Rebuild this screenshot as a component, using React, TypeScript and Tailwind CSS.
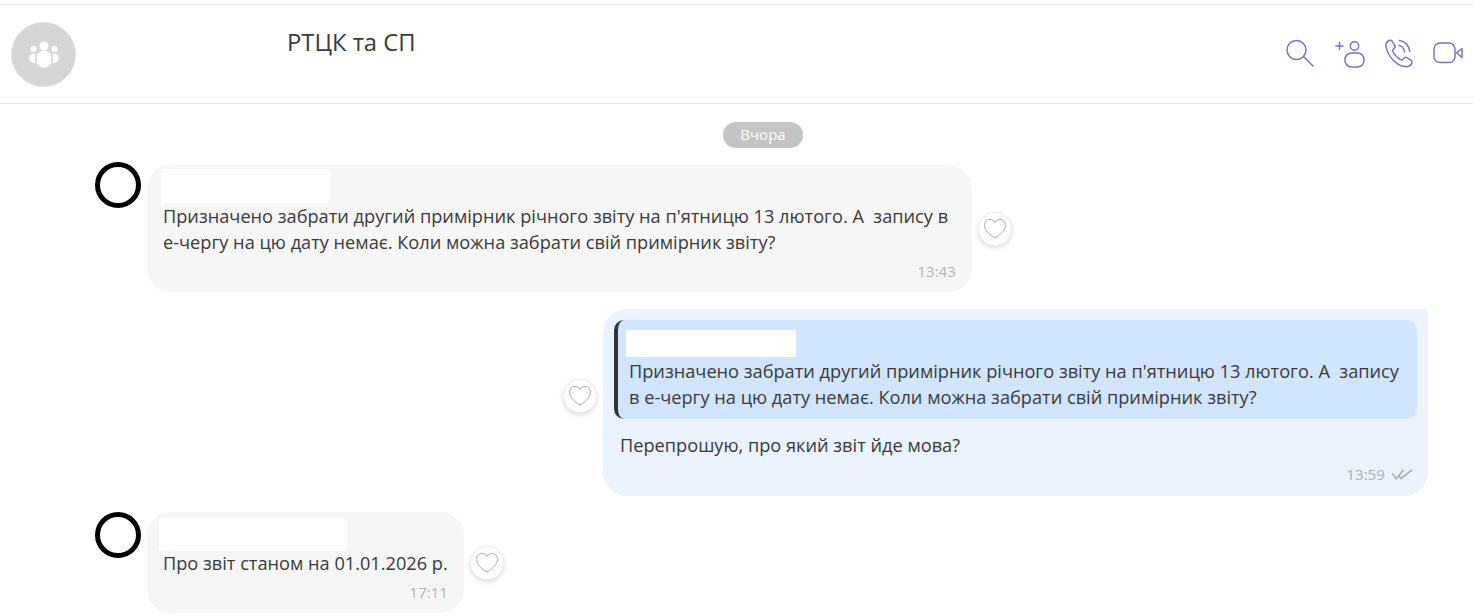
import React from 'react';

const FONT = 'font-["Open_Sans","Noto_Sans",sans-serif]';

const HeartButton: React.FC = () => (
    <div className="w-[34px] h-[34px] rounded-full bg-white border border-[#eeeeee] shadow-[0_2px_5px_rgba(0,0,0,0.14)] flex items-center justify-center shrink-0">
        <svg width="24" height="22" viewBox="0 0 24 22" fill="none" stroke="#a9a9a9" strokeWidth="1">
            <path d="M12 20C8 17.500 1.500 13 1.500 7.500C1.500 4 4 1.500 7 1.500C9 1.500 11 2.500 12 4.500C13 2.500 15 1.500 17 1.500C20 1.500 22.500 4 22.500 7.500C22.500 13 16 17.500 12 20Z" />
        </svg>
    </div>
);

const Ring: React.FC = () => (
    <div className="w-[46px] h-[46px] rounded-full border-[5px] border-black shrink-0 bg-white" />
);

const HeaderIcons: React.FC = () => (
    <div className="flex items-center gap-[19px] text-[#7d72c3]">
        <svg className="mr-px" width="30" height="30" viewBox="0 0 30 30" fill="none" stroke="currentColor" strokeWidth="1.500" strokeLinecap="round">
            <circle cx="11.500" cy="12" r="9.500" />
            <path d="M18.500 18.500L28 28" />
        </svg>
        <svg width="30" height="30" viewBox="0 0 30 30" fill="none" stroke="currentColor" strokeWidth="1.500" strokeLinecap="round">
            <path d="M1 8H8M4.500 4.500V11.500" />
            <circle cx="19.500" cy="8" r="4.200" />
            <rect x="10" y="15" width="19" height="14" rx="6.500" />
        </svg>
        <svg width="30" height="30" viewBox="0 0 30 30" fill="none" stroke="currentColor" strokeWidth="1.500" strokeLinecap="round" strokeLinejoin="round">
            <path d="M5 2.500C3 3.500 1.500 5.500 2 8.500C3 14 6 19 10 23C14 27 19 29 23.500 28.500C25.500 28.300 27.500 26.500 28 24.500C28.200 23.500 27.700 22.800 27 22.300L23 19.700C22 19.100 21 19.300 20.300 20L18.700 21.500C18 22.100 17.200 22 16.500 21.600C13 19.500 10.500 17 8.800 13.500C8.400 12.700 8.500 12 9.200 11.300L10.500 10C11.200 9.300 11.300 8.400 10.800 7.500L8.300 3.300C7.600 2.300 6.300 1.900 5 2.500Z" />
            <path d="M15 7.500C17.800 7.800 20.200 10.500 20.500 14" />
            <path d="M15.500 2.500C21 3 25.300 8 25.800 13.500" />
        </svg>
        <svg width="30" height="24" viewBox="0 0 30 24" fill="none" stroke="currentColor" strokeWidth="1.500" strokeLinejoin="round">
            <rect x="1" y="2" width="21" height="19.500" rx="6" />
            <path d="M29 7.500L23.500 11.800L29 16.500Z" />
        </svg>
    </div>
);

const GroupAvatar: React.FC = () => (
    <div className="w-[65px] h-[65px] rounded-full bg-[#d6d6d6] border border-[#dedede] flex items-center justify-center shrink-0">
        <svg width="32" height="28" viewBox="0 0 32 28" fill="white">
            <circle cx="16" cy="5" r="4.500" />
            <circle cx="5.500" cy="8" r="3" />
            <circle cx="26.500" cy="8" r="3" />
            <path d="M9 15C9 11.500 12 10 16 10C20 10 23 11.500 23 15V20C23 24.500 20 26.500 16 26.500C12 26.500 9 24.500 9 20Z" />
            <path d="M7.500 12.500C7 14 7 17 7.500 22.500C4 21.500 1 20.500 1 17C1 14 3.500 12.500 7.500 12.500Z" />
            <path d="M24.500 12.500C25 14 25 17 24.500 22.500C28 21.500 31 20.500 31 17C31 14 28.500 12.500 24.500 12.500Z" />
        </svg>
    </div>
);

export default function App() {
    return (
        <div className={`w-[1473px] h-[616px] overflow-hidden bg-white text-[#3a3a3a] ${FONT}`}>
            <div className="mt-[4px] h-[100px] border-t border-b border-[#e6e6e6] flex pl-[11px] pr-[10px]">
                <div className="pt-[17px]"><GroupAvatar /></div>
                <div className="ml-[211px] mt-[21px] text-[23.8px] leading-[32px]">РТЦК та СП</div>
                <div className="ml-auto pt-[33px]"><HeaderIcons /></div>
            </div>

            <div className="flex justify-start pt-[18px] pl-[723px]">
                <div className="w-[80px] h-[26px] rounded-full bg-[#c4c4c4] text-white text-[15px] leading-[25px] text-center">Вчора</div>
            </div>

            {/* вхідне */}
            <div className="flex items-start pl-[95px] mt-[17px]">
                <div className="mr-[6px] mt-[-3px]"><Ring /></div>
                <div className="w-[825px] h-[127px] rounded-[24px] bg-[#f6f6f6] pl-[14px] pt-[4px] pr-[14px] flex flex-col">
                    <div className="w-[169px] h-[34px] bg-white" />
                    <div className="ml-[2px] text-[18.2px] leading-[26px] whitespace-pre">
                        Призначено забрати другий примірник річного звіту на п'ятницю 13 лютого. А  запису в{'\n'}е-чергу на цю дату немає. Коли можна забрати свій примірник звіту?
                    </div>
                    <div className="text-right text-[15.2px] leading-[20px] text-[#b5b5b5] mt-[6px] pr-[2px]">13:43</div>
                </div>
                <div className="ml-[6px] mt-[47px]"><HeartButton /></div>
            </div>

            {/* вихідне */}
            <div className="flex items-center justify-end pr-[45px] mt-[17px]">
                <div className="mr-[6px] mt-[-13px]"><HeartButton /></div>
                <div className="w-[825px] h-[187px] rounded-tl-[24px] rounded-bl-[24px] rounded-br-[24px] bg-[#ebf3ff] p-[11px] flex flex-col">
                    <div className="h-[99px] rounded-[10px] bg-[#d1e5ff] border-l-[4px] border-[#2f343d] pl-[8px] pt-[10px]">
                        <div className="w-[170px] h-[27px] bg-white" />
                        <div className="ml-[3px] mt-[1px] text-[18.2px] leading-[26px] whitespace-pre">
                            Призначено забрати другий примірник річного звіту на п'ятницю 13 лютого. А  запису{'\n'}в е-чергу на цю дату немає. Коли можна забрати свій примірник звіту?
                        </div>
                    </div>
                    <div className="ml-[6px] mt-[13px] text-[18.2px] leading-[26px]">Перепрошую, про який звіт йде мова?</div>
                    <div className="mt-[6px] flex items-center justify-end gap-[6px] text-[15.2px] leading-[20px] text-[#a7b0bb] pr-[4px]">
                        <span>13:59</span>
                        <svg width="22" height="12" viewBox="0 0 22 12" fill="none" stroke="#a7b0bb" strokeWidth="1.800">
                            <path d="M1 5.500L5.500 10.500L12.500 2" />
                            <path d="M8 8L10 10.500L21 2" />
                        </svg>
                    </div>
                </div>
            </div>

            {/* вхідне */}
            <div className="flex items-start pl-[95px] mt-[16px]">
                <div className="mr-[6px]"><Ring /></div>
                <div className="w-[317px] h-[101px] rounded-[24px] bg-[#f6f6f6] pl-[12px] pt-[6px] flex flex-col">
                    <div className="w-[188px] h-[33px] bg-white" />
                    <div className="ml-[4px] mt-[-1px] text-[18.2px] leading-[26px] whitespace-pre">Про звіт станом на 01.01.2026 р.</div>
                    <div className="text-right text-[15.2px] leading-[20px] text-[#b5b5b5] mt-[6px] pr-[16px]">17:11</div>
                </div>
                <div className="ml-[6px] mt-[34px]"><HeartButton /></div>
            </div>
        </div>
    );
}
